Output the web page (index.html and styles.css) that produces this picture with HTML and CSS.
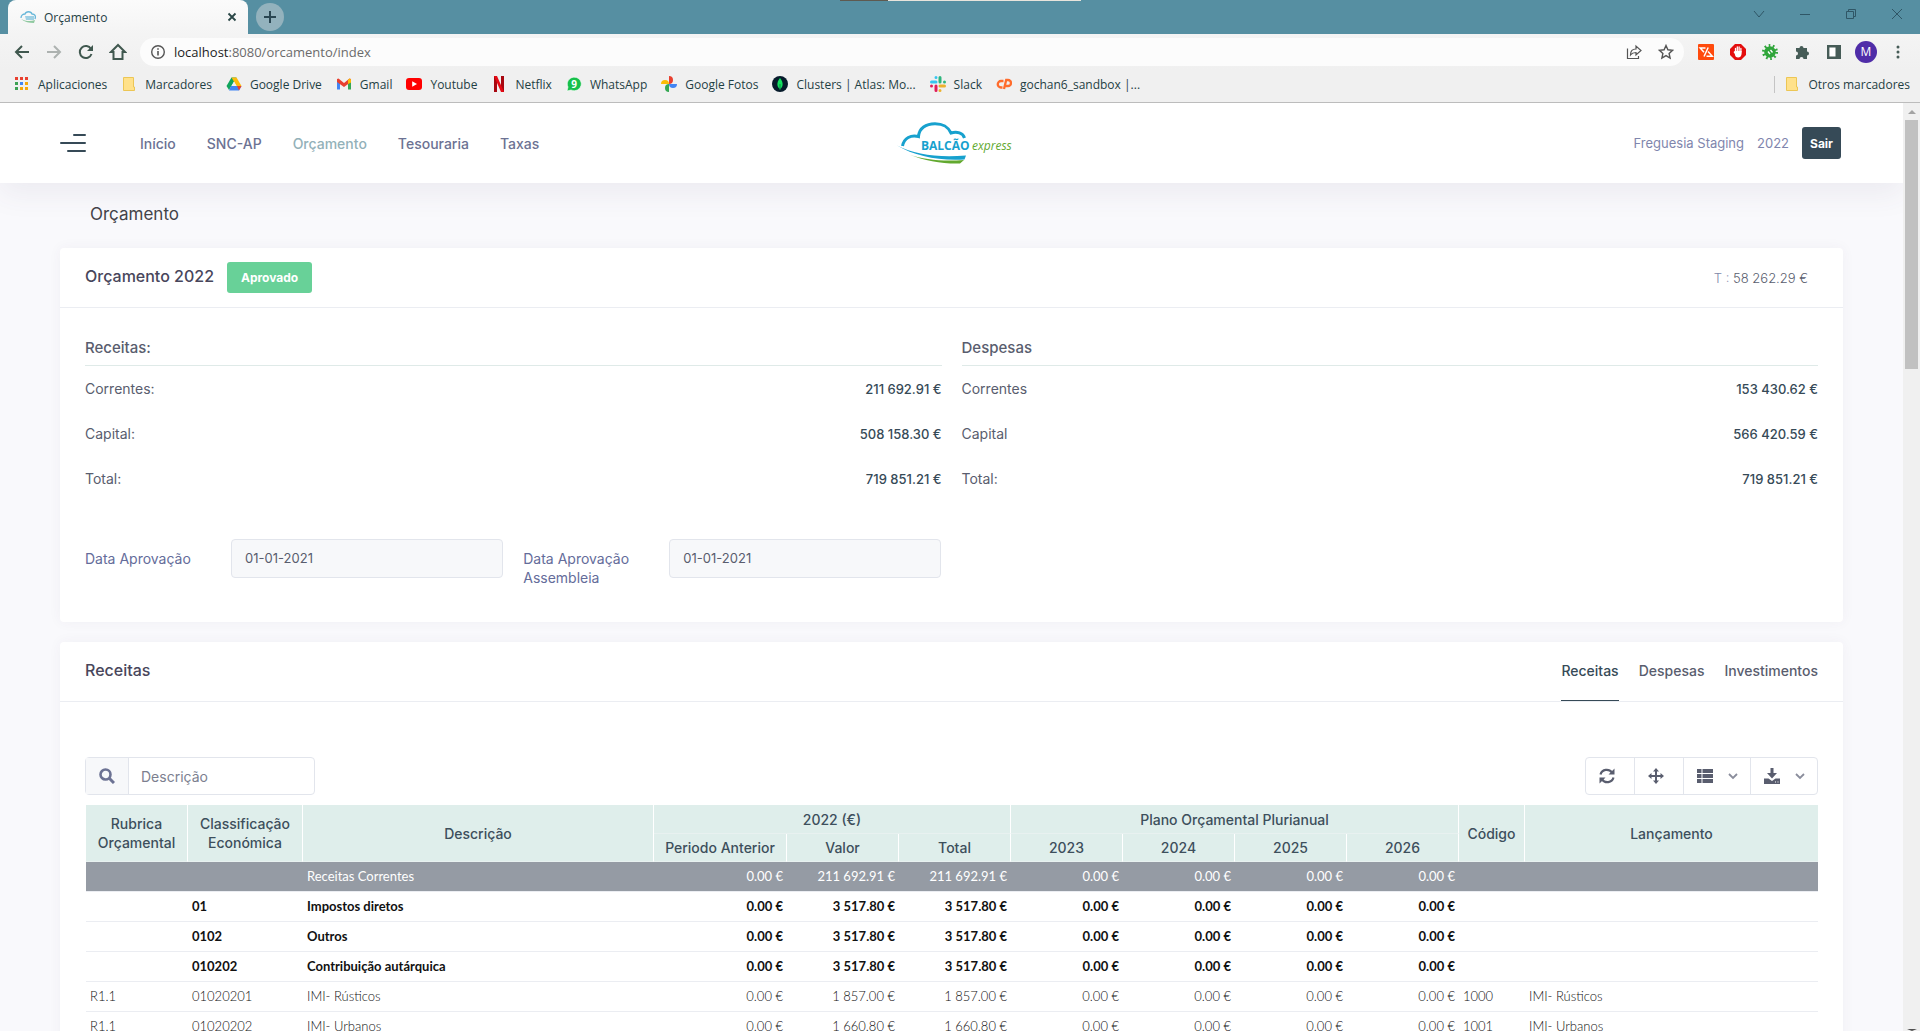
FILE: index.html
```html
<!DOCTYPE html>
<html lang="pt">
<head>
<meta charset="utf-8">
<title>Orçamento</title>
<link rel="stylesheet" href="styles.css">
</head>
<body>
<div class="tabstrip">
  <div class="tab">
    <svg class="i16" viewBox="0 0 16 16"><path d="M1 9c0-3 2-4 4-4 1-3 6-3 7 0 3 0 4 2 3 5" fill="none" stroke="#67b7d9" stroke-width="1.3"/><path d="M5 7h9v4H6z" fill="#9fd0e4"/><path d="M1 10c4 2 9 3 14 1l-1 3c-5 0-9-1-13-4z" fill="#8fc9a0"/></svg>
    <span class="tab-title">Orçamento</span>
    <button class="plain" aria-label="Cerrar"><svg class="i10" viewBox="0 0 10 10"><path d="M1.500 1.500l7 7m0-7l-7 7" stroke="#2a4646" stroke-width="1.800"/></svg></button>
  </div>
  <button class="newtab" aria-label="Nueva pestaña"><svg class="i14" viewBox="0 0 14 14"><path d="M7 1v12M1 7h12" stroke="#2a4652" stroke-width="2"/></svg></button>
  <div class="winctl">
    <button class="plain" aria-label="Buscar"><svg class="i12" viewBox="0 0 12 12"><path d="M1 3l5 6 5-6" fill="none" stroke="#2f5666"/></svg></button>
    <button class="plain" aria-label="Minimizar"><svg class="i12" viewBox="0 0 12 12"><path d="M1 6.500h10" stroke="#2f5666"/></svg></button>
    <button class="plain" aria-label="Restaurar"><svg class="i12" viewBox="0 0 12 12"><path d="M1.500 3.500h7v7h-7zM3.500 3V1.500h7v7H9" fill="none" stroke="#2f5666"/></svg></button>
    <button class="plain" aria-label="Cerrar ventana"><svg class="i12" viewBox="0 0 12 12"><path d="M1 1l10 10M11 1L1 11" stroke="#2f5666"/></svg></button>
  </div>
  <div class="peek"></div>
</div>
<div class="toolbar">
  <button class="cell" aria-label="Atrás"><svg class="i16" viewBox="0 0 16 16"><path d="M15 8H2M8 2L2 8l6 6" fill="none" stroke="#40584f" stroke-width="2"/></svg></button>
  <button class="cell" aria-label="Adelante"><svg class="i16" viewBox="0 0 16 16"><path d="M1 8h13M8 2l6 6-6 6" fill="none" stroke="#adb2b0" stroke-width="2"/></svg></button>
  <button class="cell" aria-label="Recargar"><svg class="i16" viewBox="0 0 16 16"><path d="M13.500 10A6 6 0 1 1 13 5" fill="none" stroke="#40584f" stroke-width="2"/><path d="M15 1v6H9z" fill="#40584f"/></svg></button>
  <button class="cell" aria-label="Inicio"><svg class="i18" viewBox="0 0 18 18"><path d="M9 2L2 9h2.500v7h9V9H16z" fill="none" stroke="#40584f" stroke-width="2"/></svg></button>
  <div class="omnibox">
    <svg class="i16" viewBox="0 0 16 16"><circle cx="8" cy="8" r="6.300" fill="none" stroke="#555" stroke-width="1.400"/><path d="M8 7v4.500M8 4.200v1.600" stroke="#555" stroke-width="1.600"/></svg>
    <span class="url"><b>localhost</b>:8080/orcamento/index</span>
    <button class="cell" aria-label="Compartir"><svg class="i16" viewBox="0 0 16 16"><path d="M1.500 4.500v10h11V12" fill="none" stroke="#555" stroke-width="1.200"/><path d="M4.500 11c0-4 2-6 5.500-6V2l5 4.500L10 11V8.500c-2.500 0-4 .5-5.500 2.500z" fill="none" stroke="#555" stroke-width="1.200"/></svg></button>
    <button class="cell" aria-label="Favorito"><svg class="i16" viewBox="0 0 16 16"><path d="M8 1.500l1.900 4.300 4.600.5-3.400 3.100 1 4.600L8 11.600 3.900 14l1-4.600L1.500 6.300l4.600-.5z" fill="none" stroke="#555" stroke-width="1.400"/></svg></button>
  </div>
  <button class="cell" aria-label="Extensión"><svg class="i16" viewBox="0 0 16 16"><rect width="16" height="16" rx="1" fill="#ff4a0c"/><path d="M7.500 4H2.200L6 8.200M10.200 3.500L6 12.500M10 7.500l4.300 4.700H8.500" fill="none" stroke="#fff" stroke-width="1.500"/></svg></button>
  <button class="cell" aria-label="Bloqueador"><svg class="i16" viewBox="0 0 16 16"><path d="M5 0h6l5 5v6l-5 5H5l-5-5V5z" fill="#e40d0d"/><path d="M5.500 8V4.500M7.300 8V3M9.100 8V3M10.900 8V4.500" stroke="#fff" stroke-width="1.300" stroke-linecap="round"/><path d="M4.800 7h6.800v3q-.6 3.500-3.500 3.500T4.800 10L3.500 8z" fill="#fff"/></svg></button>
  <button class="cell" aria-label="Depurador"><svg class="i16" viewBox="0 0 16 16"><circle cx="8" cy="8" r="6.500" fill="none" stroke="#2fa53a" stroke-width="3" stroke-dasharray="1.600 2.480"/><circle cx="8" cy="8" r="5.800" fill="#2fa53a"/><path d="M6 7.500L8 10M8.500 6l2 2.500" stroke="#fff" stroke-width="1.300"/></svg></button>
  <button class="cell" aria-label="Extensiones"><svg class="i16" viewBox="0 0 16 16"><path d="M2 4h3.500a2 2 0 1 1 4 0H13v3.500a2 2 0 1 1 0 4V15H9.500a2 2 0 1 0-4 0H2v-3.500a2 2 0 1 0 0-4z" fill="#465c57"/></svg></button>
  <button class="cell" aria-label="Panel lateral"><svg class="i14" viewBox="0 0 14 14"><path d="M1.200 1.200h11.600v11.600H1.200z" fill="#fff" stroke="#465c57" stroke-width="2.400"/><path d="M8.500 1H13v12H8.500z" fill="#465c57"/></svg></button>
  <button class="cell" aria-label="Perfil"><span class="avatar">M</span></button>
  <button class="cell" aria-label="Menú"><svg class="i16" viewBox="0 0 16 16"><path d="M8 3v0M8 8v0M8 13v0" stroke="#465c57" stroke-width="3" stroke-linecap="round"/></svg></button>
</div>
<div class="bookmarks">
  <a href="#"><svg class="i16" viewBox="0 0 16 16"><path d="M1 1h3v3H1zM6 1h3v3H6zM11 1h3v3h-3z" fill="#e8402f"/><path d="M1 6h3v3H1z" fill="#3da153"/><path d="M6 6h3v3H6z" fill="#4285f4"/><path d="M11 6h3v3h-3zM6 11h3v3H6zM11 11h3v3h-3z" fill="#f6a70a"/><path d="M1 11h3v3H1z" fill="#3da153"/></svg>Aplicaciones</a>
  <a href="#"><svg class="i16" viewBox="0 0 16 16"><path d="M2.500 1.500h10v9.500h1v3.500h-11z" fill="#ffe18a" stroke="#ecc655"/></svg>Marcadores</a>
  <a href="#"><svg class="i16" viewBox="0 0 16 16"><path d="M5.500 1.500h5L5.500 10 3 14 .5 10z" fill="#11a55c"/><path d="M5.500 1.500h5l5 8.500h-5z" fill="#fcbb0e"/><path d="M5 10h10.500L13 14.500H3z" fill="#4285f4"/><path d="M11 10h4.500L13 14.500z" fill="#e8402f"/><path d="M8 5.500l2.600 4.500H5.400z" fill="#f0f0f0"/></svg>Google Drive</a>
  <a href="#"><svg class="i16" viewBox="0 0 16 16"><path d="M1 3v10.500h3V7z" fill="#4285f4"/><path d="M15 3v10.500h-3V7z" fill="#34a853"/><path d="M1 3l1.500-.5L8 7l5.500-4.500L15 3v3l-7 5-7-5z" fill="#e8402f"/><path d="M12 4l1.500-1.500L15 3.500v3L12 8z" fill="#fbbc04"/></svg>Gmail</a>
  <a href="#"><svg class="i16" viewBox="0 0 16 16"><rect y="2" width="16" height="12" rx="3" fill="#f00"/><path d="M6.200 5.200v5.600L11 8z" fill="#fff"/></svg>Youtube</a>
  <a href="#"><svg class="i16" viewBox="0 0 16 16"><path d="M3 0h3v16H3zM10 0h3v16h-3z" fill="#a80710"/><path d="M3 0h3l7 16h-3z" fill="#e50914"/></svg>Netflix</a>
  <a href="#"><svg class="i16" viewBox="0 0 16 16"><path d="M1 15l1-4A7 6.800 0 1 1 5 14z" fill="#17c04b" stroke="#fff" stroke-width=".6"/><text x="8" y="12" text-anchor="middle" class="glyph" fill="#fff">9</text></svg>WhatsApp</a>
  <a href="#"><svg class="i16" viewBox="0 0 16 16"><path d="M8 8V0a4 4 0 0 1 0 8z" fill="#e8402f"/><path d="M8 8h8a4 4 0 0 1-8 0z" fill="#4285f4"/><path d="M8 8v8a4 4 0 0 1 0-8z" fill="#34a853"/><path d="M8 8H0a4 4 0 0 1 8 0z" fill="#fbbc04"/></svg>Google Fotos</a>
  <a href="#"><svg class="i16" viewBox="0 0 16 16"><circle cx="8" cy="8" r="8" fill="#061b2b"/><path d="M8 2c4 5 3 9 0 11-3-2-4-6 0-11z" fill="#13e05f"/><path d="M8 8v6" stroke="#0a8a45"/></svg>Clusters | Atlas: Mo...</a>
  <a href="#"><svg class="i16" viewBox="0 0 16 16"><g stroke-width="3" stroke-linecap="round"><path d="M6 1.500v0M1.500 6H6" stroke="#36c5f0"/><path d="M10 1.500V6M14.500 6v0" stroke="#2eb67d"/><path d="M14.500 10H10M10 14.500v0" stroke="#ecb22e"/><path d="M6 14.500V10M1.500 10v0" stroke="#e01e5a"/></g></svg>Slack</a>
  <a href="#"><svg class="i16" viewBox="0 0 16 16"><path d="M7.500 5H5a3 3 0 0 0 0 6.500h1.500M8 13l2.200-9H12a2.700 2.700 0 0 1 0 6H9.500" fill="none" stroke="#ff6c2c" stroke-width="2.300"/></svg>gochan6_sandbox |...</a>
  <a href="#" class="others"><svg class="i16" viewBox="0 0 16 16"><path d="M2.500 1.500h10v9.500h1v3.500h-11z" fill="#ffe18a" stroke="#ecc655"/></svg>Otros marcadores</a>
</div>
<div class="viewport">
  <div class="page">
    <header class="topbar">
      <div class="left">
        <button class="plain" aria-label="Menu"><svg class="burger" viewBox="0 0 26 18"><path d="M14 1h11M1 9h24M8 17h17" stroke="#364a57" stroke-width="2" stroke-linecap="round"/></svg></button>
        <nav class="nav">
          <a href="#">Início</a><a href="#">SNC-AP</a><a href="#" class="active">Orçamento</a><a href="#">Tesouraria</a><a href="#">Taxas</a>
        </nav>
      </div>
      <svg class="logo" viewBox="14 12 118 44">
        <path d="M19.500 37C21 29 28 25.500 35.500 27.500 36 19 43 14.700 52 14.700S65 18 68 24c6-2 12 0 13.500 5" fill="none" stroke="#17a1ce" stroke-width="3"/>
        <path d="M14 36.500C32 45.500 55 49 83 46.500L81.500 50.500C55 52 32 47 14 36.500z" fill="#17a1ce"/>
        <path d="M26 45.500C42 51 60 52.500 81 51L77 54.500C60 55 42 52 26 45.500z" fill="#62a92f"/>
        <text x="38" y="41" class="logo-a">BALCÃO</text><text x="89" y="41" class="logo-b">express</text>
      </svg>
      <div class="user"><span>Freguesia Staging</span><span>2022</span><button class="exit">Sair</button></div>
    </header>
    <main class="content">
      <h1>Orçamento</h1>
      <section class="card">
        <div class="card-head">
          <h2>Orçamento 2022</h2><span class="badge">Aprovado</span>
          <span class="balance">T : <em>58 262.29 €</em></span>
        </div>
        <div class="summary">
          <dl>
            <div class="caption"><dt>Receitas:</dt></div>
            <div><dt>Correntes:</dt><dd>211 692.91 €</dd></div>
            <div><dt>Capital:</dt><dd>508 158.30 €</dd></div>
            <div><dt>Total:</dt><dd>719 851.21 €</dd></div>
          </dl>
          <dl>
            <div class="caption"><dt>Despesas</dt></div>
            <div><dt>Correntes</dt><dd>153 430.62 €</dd></div>
            <div><dt>Capital</dt><dd>566 420.59 €</dd></div>
            <div><dt>Total:</dt><dd>719 851.21 €</dd></div>
          </dl>
          <form class="dates">
            <label for="d1">Data Aprovação</label><input id="d1" type="text" value="01-01-2021" readonly>
            <label for="d2">Data Aprovação Assembleia</label><input id="d2" type="text" value="01-01-2021" readonly>
          </form>
        </div>
      </section>
      <section class="card">
        <div class="card-head">
          <h2>Receitas</h2>
          <nav class="tabs"><a href="#" class="on">Receitas</a><a href="#">Despesas</a><a href="#">Investimentos</a></nav>
        </div>
        <div class="panel">
          <div class="tools">
            <div class="search">
              <label for="q" aria-label="Pesquisar"><svg class="i16" viewBox="0 0 16 16"><circle cx="6.500" cy="6.500" r="5" fill="none" stroke="#6c7293" stroke-width="2.600"/><path d="M10 10l5 5" stroke="#6c7293" stroke-width="3"/></svg></label>
              <input id="q" type="text" placeholder="Descrição">
            </div>
            <div class="btns">
              <button aria-label="Atualizar"><svg class="i16" viewBox="0 0 16 16"><path d="M1.500 6.500C3 1 10 .5 13 4.500M14.500 9.500C13 15 6 15.500 3 11.500" fill="none" stroke="#595d6e" stroke-width="2.200"/><path d="M15.500.5v6h-6zM.5 15.500v-6h6z" fill="#595d6e"/></svg></button>
              <button aria-label="Mover"><svg class="i16" viewBox="0 0 16 16"><path d="M8 2v12M2 8h12" stroke="#595d6e" stroke-width="2"/><path d="M8 0l3 3.500H5zM8 16l3-3.500H5zM0 8l3.500-3v6zM16 8l-3.500-3v6z" fill="#595d6e"/></svg></button>
              <button aria-label="Colunas"><svg class="i16" viewBox="0 0 16 16"><path d="M0 1h4.500v4H0zM5.500 1H16v4H5.500zM0 6h4.500v4H0zM5.500 6H16v4H5.500zM0 11h4.500v4H0zM5.500 11H16v4H5.500z" fill="#595d6e"/></svg><svg class="i10" viewBox="0 0 10 10"><path d="M1 3l4 4 4-4" fill="none" stroke="#8a8d9c" stroke-width="1.800"/></svg></button>
              <button aria-label="Exportar"><svg class="i16" viewBox="0 0 16 16"><path d="M6.500 0h3v5h3.500l-5 5.500L3 5h3.500z" fill="#595d6e"/><path d="M0 10.500h4.500L8 13l3.500-2.500H16V16H0z" fill="#595d6e"/><path d="M11 14h1M13.500 14h1" stroke="#fff"/></svg><svg class="i10" viewBox="0 0 10 10"><path d="M1 3l4 4 4-4" fill="none" stroke="#8a8d9c" stroke-width="1.800"/></svg></button>
            </div>
          </div>
          <table>
            <colgroup><col class="c-rub"><col class="c-cls"><col><col class="c-ant"><col class="c-val"><col class="c-val"><col class="c-val"><col class="c-val"><col class="c-val"><col class="c-val"><col class="c-cod"><col class="c-lan"></colgroup>
            <thead>
              <tr><th rowspan="2">Rubrica Orçamental</th><th rowspan="2">Classificação Económica</th><th rowspan="2">Descrição</th><th colspan="3" class="group">2022 (€)</th><th colspan="4" class="group">Plano Orçamental Plurianual</th><th rowspan="2">Código</th><th rowspan="2" class="last">Lançamento</th></tr>
              <tr><th>Periodo Anterior</th><th>Valor</th><th>Total</th><th>2023</th><th>2024</th><th>2025</th><th>2026</th></tr>
            </thead>
            <tbody>
              <tr class="root"><td></td><td></td><td>Receitas Correntes</td><td class="n">0.00 €</td><td class="n">211 692.91 €</td><td class="n">211 692.91 €</td><td class="n">0.00 €</td><td class="n">0.00 €</td><td class="n">0.00 €</td><td class="n">0.00 €</td><td></td><td></td></tr>
              <tr class="sum"><td></td><td>01</td><td>Impostos diretos</td><td class="n">0.00 €</td><td class="n">3 517.80 €</td><td class="n">3 517.80 €</td><td class="n">0.00 €</td><td class="n">0.00 €</td><td class="n">0.00 €</td><td class="n">0.00 €</td><td></td><td></td></tr>
              <tr class="sum"><td></td><td>0102</td><td>Outros</td><td class="n">0.00 €</td><td class="n">3 517.80 €</td><td class="n">3 517.80 €</td><td class="n">0.00 €</td><td class="n">0.00 €</td><td class="n">0.00 €</td><td class="n">0.00 €</td><td></td><td></td></tr>
              <tr class="sum"><td></td><td>010202</td><td>Contribuição autárquica</td><td class="n">0.00 €</td><td class="n">3 517.80 €</td><td class="n">3 517.80 €</td><td class="n">0.00 €</td><td class="n">0.00 €</td><td class="n">0.00 €</td><td class="n">0.00 €</td><td></td><td></td></tr>
              <tr><td>R1.1</td><td>01020201</td><td>IMI- Rústicos</td><td class="n">0.00 €</td><td class="n">1 857.00 €</td><td class="n">1 857.00 €</td><td class="n">0.00 €</td><td class="n">0.00 €</td><td class="n">0.00 €</td><td class="n">0.00 €</td><td>1000</td><td>IMI- Rústicos</td></tr>
              <tr><td>R1.1</td><td>01020202</td><td>IMI- Urbanos</td><td class="n">0.00 €</td><td class="n">1 660.80 €</td><td class="n">1 660.80 €</td><td class="n">0.00 €</td><td class="n">0.00 €</td><td class="n">0.00 €</td><td class="n">0.00 €</td><td>1001</td><td>IMI- Urbanos</td></tr>
            </tbody>
          </table>
        </div>
      </section>
    </main>
  </div>
  <div class="scrollbar"><span class="up"></span><span class="thumb"></span><span class="down"></span></div>
</div>
</body>
</html>
```
FILE: styles.css
```css
* { box-sizing: border-box; }
body {
  margin: 0;
  height: 100vh;
  overflow: hidden;
  display: flex;
  flex-direction: column;
  font-family: Inter, sans-serif;
  font-size: 13px;
  color: #595d6e;
}
a { color: inherit; text-decoration: none; }
button, input { font: inherit; color: inherit; }
svg { display: block; flex: none; }
.i10 { width: 10px; height: 10px; }
.i12 { width: 12px; height: 12px; }
.i14 { width: 14px; height: 14px; }
.i16 { width: 16px; height: 16px; }
.i18 { width: 18px; height: 18px; }
.plain, .cell { border: 0; padding: 0; background: none; }

/* browser frame */
.tabstrip, .toolbar, .bookmarks { flex: none; font-family: "Open Sans", sans-serif; font-size: 12px; color: #1f4044; }
.tabstrip { position: relative; height: 34px; padding-left: 8px; display: flex; background: #568fa2; }
.tab { width: 240px; padding: 0 11px 0 12px; display: flex; align-items: center; gap: 8px; border-radius: 8px 8px 0 0; background: linear-gradient(#fbfbfb, #f4f4f4); }
.tab-title { flex: 1; }
.newtab { width: 28px; height: 28px; margin: 3px 8px; padding: 0; border: 0; border-radius: 50%; background: #93b2bd; display: grid; place-items: center; }
.winctl { margin-left: auto; height: 28px; display: flex; }
.winctl button { width: 46px; display: grid; place-items: center; }
.peek { position: absolute; top: 0; left: 840px; width: 241px; height: 1px; background: linear-gradient(90deg, #5e5a50 48px, #e8e4dc 48px); }
.toolbar { height: 36px; padding: 0 6px; display: flex; align-items: center; background: linear-gradient(#f4f4f4, #f0f0f0); }
.cell { width: 32px; height: 28px; display: grid; place-items: center; flex: none; }
.omnibox { flex: 1; height: 28px; margin: 0 6px; padding: 0 2px 0 10px; display: flex; align-items: center; border-radius: 14px; background: #fcfcfc; }
.url { flex: 1; padding-left: 8px; font-size: 13px; color: #6b6b6b; }
.url b { font-weight: 400; color: #1c1c1c; }
.avatar { width: 22px; height: 22px; border-radius: 50%; background: #4f2da8; color: #fff; line-height: 22px; text-align: center; }
.bookmarks { height: 33px; padding: 0 10px 4px 14px; display: flex; align-items: center; gap: 14px; background: #f0f0f0; border-bottom: 1px solid #bcbcbc; white-space: nowrap; }
.bookmarks a { display: flex; align-items: center; gap: 8px; }
.bookmarks .others { margin-left: auto; padding-left: 9px; border-left: 1px solid #c4c4c4; }
.glyph { font: 700 10px "Open Sans", sans-serif; }

/* page */
.viewport { flex: 1; min-height: 0; display: flex; }
.page { flex: 1; min-width: 0; overflow: hidden; background: #f9f9fc; }
.scrollbar { width: 17px; display: flex; flex-direction: column; align-items: center; background: #f0f0f0; }
.up { margin: 7px 0 6px; border: 4px solid transparent; border-top: 0; border-bottom-color: #a3a3a3; }
.thumb { width: 13px; height: 249px; background: #c1c1c1; }
.down { margin-top: auto; border: 5px solid transparent; border-bottom: 0; border-top: 2px solid #505050; }

.topbar { height: 80px; padding: 0 62px 0 60px; display: flex; align-items: center; background: #fff; box-shadow: 0 10px 30px rgba(82, 63, 105, .08); }
.burger { width: 26px; height: 18px; }
.left { flex: 1 1 0; display: flex; align-items: center; }
.nav { margin-left: 54px; display: flex; gap: 31px; font-size: 14px; font-weight: 500; color: #6c7293; }
.nav .active { color: #93b1b9; }
.logo { width: 118px; height: 44px; margin-left: 10px; }
.logo-a { font: 700 12px "Open Sans", sans-serif; fill: #17a1ce; }
.logo-b { font: italic 400 12px "Open Sans", sans-serif; fill: #62a92f; }
.user { flex: 1 1 0; display: flex; align-items: center; justify-content: flex-end; gap: 13px; color: #7f86ad; }
.exit { height: 32px; padding: 0 8px; border: 0; border-radius: 3px; background: #364a57; color: #fff; font-size: 12px; font-weight: 700; }

.content { padding: 20px 60px 0; }
h1 { margin: 0 0 22px 30px; font-size: 17px; line-height: 23px; font-weight: 400; color: #434349; }
.card { margin-bottom: 20px; border-radius: 4px; background: #fff; box-shadow: 0 0 13px rgba(82, 63, 105, .05); }
.card-head { height: 60px; padding: 0 25px; display: flex; align-items: center; border-bottom: 1px solid #ebedf2; }
h2 { margin: 0; padding-bottom: 3px; font-size: 16px; line-height: 24px; font-weight: 500; color: #48465b; }
.badge { height: 31px; margin-left: 13px; padding: 0 14px; border-radius: 3px; line-height: 31px; background: #68d198; color: #fff; font-size: 12px; font-weight: 700; }
.balance { margin-left: auto; padding-right: 10px; color: #8188a8; font-weight: 300; }
.balance em { font-style: normal; color: #595d6e; }
.summary { padding: 30px 25px 35px; display: grid; grid-template-columns: 1fr 1fr; column-gap: 20px; }
dl { margin: 0; font-size: 14px; }
dl div { height: 45px; display: flex; justify-content: space-between; align-items: center; }
dl .caption { height: 28px; border-bottom: 1px solid #dfeae8; font-size: 15px; font-weight: 500; align-items: flex-start; }
dd { margin: 0; font-size: 13px; font-weight: 500; color: #364a57; }
.dates { padding-top: 38px; display: grid; grid-template-columns: 126fr 272fr 126fr 272fr; column-gap: 20px; align-items: start; color: #646c9a; }
.dates label { padding-top: 10px; font-size: 14px; line-height: 19px; }
.dates input { width: 100%; height: 39px; padding: 0 13px 2px; border: 1px solid #e2e5ec; border-radius: 4px; background: #f7f8fa; color: #595d6e; }
.tabs { margin-left: auto; align-self: stretch; display: flex; gap: 20px; font-size: 14px; font-weight: 500; line-height: 57px; }
.tabs .on { color: #364a57; box-shadow: inset 0 -1px #364a57; }
.panel { padding: 55px 25px 20px; }
.tools { height: 48px; display: flex; justify-content: space-between; align-items: flex-start; }
.search { width: 230px; height: 38px; display: flex; border: 1px solid #e2e5ec; border-radius: 4px; }
.search label { width: 43px; display: grid; place-items: center; background: #f7f8fa; border-right: 1px solid #e2e5ec; }
.search input { flex: 1; min-width: 0; border: 0; padding: 0 12px; background: none; font-size: 14px; }
.search input::placeholder { color: #7c7f8f; }
.btns { display: flex; border: 1px solid #e2e5ec; border-radius: 4px; }
.btns button { height: 36px; padding: 0 19px 0 13px; display: flex; align-items: center; gap: 15px; border: 0; border-right: 1px solid #e2e5ec; background: none; }
.btns button:nth-child(n+3) { padding-right: 12px; }
.btns button:last-child { border-right: 0; }

table { width: calc(100% - 1px); margin-left: 1px; table-layout: fixed; border-collapse: separate; border-spacing: 0; font-family: Lato, sans-serif; color: #111; }
.c-rub { width: 102px; }
.c-cls { width: 115px; }
.c-ant { width: 133px; }
.c-val { width: 112px; }
.c-cod { width: 66px; }
.c-lan { width: 293px; }
th { height: 28px; padding: 0 6px; border-right: 1px solid #fff; border-bottom: 1px solid #e8f1f0; background: #dfeeeb; color: #3d4f5c; font: 500 14px/19px Inter, sans-serif; }
th.group { height: 29px; }
th.last { border-right: 0; }
td { height: 30px; padding: 0 4px; border-bottom: 1px solid #ebedf2; font-weight: 300; line-height: 19px; white-space: nowrap; }
.n { text-align: right; }
.root td { background: #959ba4; color: #fff; font-weight: 400; }
.sum td { font-weight: 700; }
```
